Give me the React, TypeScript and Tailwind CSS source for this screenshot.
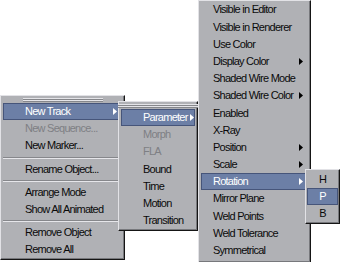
import React from "react";

type Item = {
  label?: string;
  sep?: boolean;
  disabled?: boolean;
  arrow?: boolean;
  active?: boolean;
};

const Arrow = ({ white }: { white?: boolean }) => (
  <svg width="4" height="7" viewBox="0 0 4 7" className="shrink-0">
    <polygon points="0,0 4,3.5 0,7" fill={white ? "#ffffff" : "#000000"} />
  </svg>
);

const Grip = () => (
  <div className="h-[7px] flex flex-col items-center justify-center">
    <div className="w-[80px] h-[1px] bg-[#e4e4e8]" />
    <div className="w-[80px] h-[1px] bg-[#86878b]" />
    <div className="w-[80px] h-[1px] bg-[#e4e4e8]" />
    <div className="w-[80px] h-[1px] bg-[#86878b]" />
  </div>
);

const Sep = () => (
  <div className="h-[6px] flex flex-col justify-center mx-[2px]">
    <div className="h-[1px] bg-[#86878b]" />
    <div className="h-[1px] bg-[#e6e6ea]" />
  </div>
);

function Row({ item, pl, pr, mx }: { item: Item; pl: string; pr: string; mx: string }) {
  const base =
    "h-[17.2px] shrink-0 flex items-center justify-between gap-[2px] border whitespace-nowrap " +
    pl + " " + pr + " " + mx;
  const state = item.active
    ? " bg-[#6c7fa6] border-[#46557a] text-white"
    : item.disabled
    ? " border-transparent text-[#7e7f84]"
    : " border-transparent text-[#0a0a0a]";
  return (
    <div className={base + state}>
      <span>{item.label}</span>
      {item.arrow ? <Arrow white={item.active} /> : null}
    </div>
  );
}

const menuBox =
  "absolute flex flex-col bg-[#b0b1b5] border border-t-[#e2e2e6] border-l-[#e2e2e6] border-r-[#151515] border-b-[#151515] shadow-[inset_-1px_-1px_0_#77787c]";

const menu1: Item[] = [
  { label: "New Track", arrow: true, active: true },
  { label: "New Sequence...", disabled: true },
  { label: "New Marker..." },
  { sep: true },
  { label: "Rename Object..." },
  { sep: true },
  { label: "Arrange Mode" },
  { label: "Show All Animated" },
  { sep: true },
  { label: "Remove Object" },
  { label: "Remove All" },
];

const menu2: Item[] = [
  { label: "Parameter", arrow: true, active: true },
  { label: "Morph", disabled: true },
  { label: "FLA", disabled: true },
  { label: "Bound" },
  { label: "Time" },
  { label: "Motion" },
  { label: "Transition" },
];

const menu3: Item[] = [
  { label: "Visible in Editor" },
  { label: "Visible in Renderer" },
  { label: "Use Color" },
  { label: "Display Color", arrow: true },
  { label: "Shaded Wire Mode" },
  { label: "Shaded Wire Color", arrow: true },
  { label: "Enabled" },
  { label: "X-Ray" },
  { label: "Position", arrow: true },
  { label: "Scale", arrow: true },
  { label: "Rotation", arrow: true, active: true },
  { label: "Mirror Plane" },
  { label: "Weld Points" },
  { label: "Weld Tolerance" },
  { label: "Symmetrical" },
];

const menu4: Item[] = [{ label: "H" }, { label: "P", active: true }, { label: "B" }];

export default function App() {
  return (
    <div className="relative w-[340px] h-[262px] overflow-hidden bg-white font-['Liberation_Sans',Arial,sans-serif] text-[11px] tracking-[-0.75px] leading-none">
      {/* Menu 1 */}
      <div className={menuBox + " left-0 top-[95px] w-[125px] h-[165px]"}>
        <Grip />
        {menu1.map((it, i) =>
          it.sep ? <Sep key={i} /> : <Row key={i} item={it} pl="pl-[21px]" pr="pr-[4px]" mx="mx-[2px]" />
        )}
      </div>

      {/* Menu 2 */}
      <div className={menuBox + " left-[118px] top-[101px] w-[80px] h-[130px]"}>
        <Grip />
        {menu2.map((it, i) => (
          <Row key={i} item={it} pl="pl-[21px]" pr="pr-[1px]" mx="mx-[2px]" />
        ))}
      </div>

      {/* Menu 3 */}
      <div className={menuBox + " left-[198px] top-0 w-[113px] h-[263px] pt-[0.3px]"}>
        {menu3.map((it, i) => (
          <Row key={i} item={it} pl="pl-[11px]" pr="pr-[4px]" mx="mx-[2px]" />
        ))}
      </div>

      {/* Menu 4 */}
      <div className={menuBox + " left-[305px] top-[169px] w-[35px] h-[55px] pt-[0.5px]"}>
        {menu4.map((it, i) => (
          <div
            key={i}
            className={
              "h-[17.2px] shrink-0 flex items-center justify-center border mx-[1px] " +
              (it.active ? "bg-[#6c7fa6] border-[#46557a] text-white" : "border-transparent text-[#0a0a0a]")
            }
          >
            {it.label}
          </div>
        ))}
      </div>
    </div>
  );
}
